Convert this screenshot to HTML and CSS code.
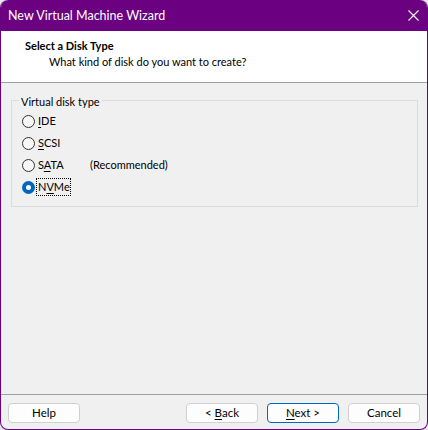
FILE: index.html
```html
<!DOCTYPE html>
<html lang="en">
<head>
<meta charset="utf-8">
<title>New Virtual Machine Wizard</title>
<link rel="stylesheet" href="styles.css">
</head>
<body>
<div class="window">
  <div class="titlebar">
    <span class="title">New Virtual Machine Wizard</span>
    <svg class="close" width="11" height="11" viewBox="0 0 11 11"><path d="M0.5 0.5 L10.5 10.5 M10.5 0.5 L0.5 10.5" stroke="#fff" stroke-width="1.1" fill="none"/></svg>
  </div>
  <div class="header">
    <div class="head-title">Select a Disk Type</div>
    <div class="head-sub">What kind of disk do you want to create?</div>
  </div>
  <div class="content">
    <div class="group">
      <div class="group-label">Virtual disk type</div>
      <div class="radio-row"><span class="radio"></span><span class="label"><u>I</u>DE</span></div>
      <div class="radio-row"><span class="radio"></span><span class="label"><u>S</u>CSI</span></div>
      <div class="radio-row"><span class="radio"></span><span class="label name-wide">S<u>A</u>TA</span><span class="label">(Recommended)</span></div>
      <div class="radio-row"><span class="radio checked"></span><span class="label focus">N<u>V</u>Me</span></div>
    </div>
  </div>
  <div class="footer">
    <button class="btn btn-help">Help</button>
    <div class="nav">
      <button class="btn">&lt; <u>B</u>ack</button>
      <button class="btn btn-default"><u>N</u>ext &gt;</button>
      <button class="btn">Cancel</button>
    </div>
  </div>
</div>
</body>
</html>
```
FILE: styles.css
```css
html, body {
  margin: 0;
  padding: 0;
  background: #e6e6e6;
}
body {
  font-family: Lato, "Noto Sans", sans-serif;
  font-size: 11px;
  color: #000;
}
.window {
  box-sizing: border-box;
  width: 428px;
  height: 430px;
  display: flex;
  flex-direction: column;
  background: #f0f0f0;
  border: 1px solid #6b0080;
  border-top: none;
  border-radius: 8px;
  overflow: hidden;
}
.titlebar {
  height: 31px;
  flex: none;
  background: #6b0080;
  color: #fff;
  font-size: 12.5px;
  display: flex;
  align-items: center;
  justify-content: space-between;
  padding: 0 8px 0 8px;
  margin: 0 -1px;
  border-radius: 8px 8px 0 0;
}
.title {
  line-height: 16px;
}
.close {
  display: block;
  margin-right: 1px;
}
.header {
  background: #fff;
  height: 52px;
  box-sizing: border-box;
  padding-top: 7px;
  border-bottom: 1px solid #a0a0a0;
  flex: none;
}
.head-title {
  font-weight: bold;
  line-height: 16px;
  padding-left: 24px;
}
.head-sub {
  line-height: 16px;
  padding-left: 48px;
}
.content {
  flex: 1;
  padding-top: 17px;
}
.group {
  margin: 0 9px 0 10px;
  padding: 0 10px 8px 10px;
  border: 1px solid #dcdcdc;
}
.group-label {
  display: table;
  margin: -7px 0 0 -3px;
  padding: 0 2px;
  background: #f0f0f0;
  line-height: 16px;
}
.radio-row {
  height: 22px;
  display: flex;
  align-items: center;
}
.radio {
  box-sizing: border-box;
  width: 13px;
  height: 13px;
  border-radius: 50%;
  border: 1px solid #333;
  background: #f7f7f7;
  flex: none;
  margin-right: 3px;
}
.radio.checked {
  border: 4px solid #0067c0;
  background: #fff;
}
.label {
  line-height: 16px;
}
.name-wide {
  width: 52px;
}
.focus {
  outline: 1px dotted #000;
  outline-offset: 0;
  margin-left: -1px;
  padding-left: 1px;
}
u {
  text-decoration: underline;
  text-underline-offset: 2px;
}
.footer {
  flex: none;
  border-top: 1px solid #a0a0a0;
  padding: 8px 7px 6px 7px;
  display: flex;
  justify-content: space-between;
}
.nav {
  display: flex;
  gap: 9px;
}
.btn {
  box-sizing: border-box;
  width: 72px;
  height: 20px;
  padding: 0;
  font-family: inherit;
  font-size: 11.5px;
  color: #000;
  background: #fdfdfd;
  border: 1px solid #d0d0d0;
  border-radius: 4px;
  line-height: 16px;
}
.btn-default {
  border-color: #0067c0;
}
```
